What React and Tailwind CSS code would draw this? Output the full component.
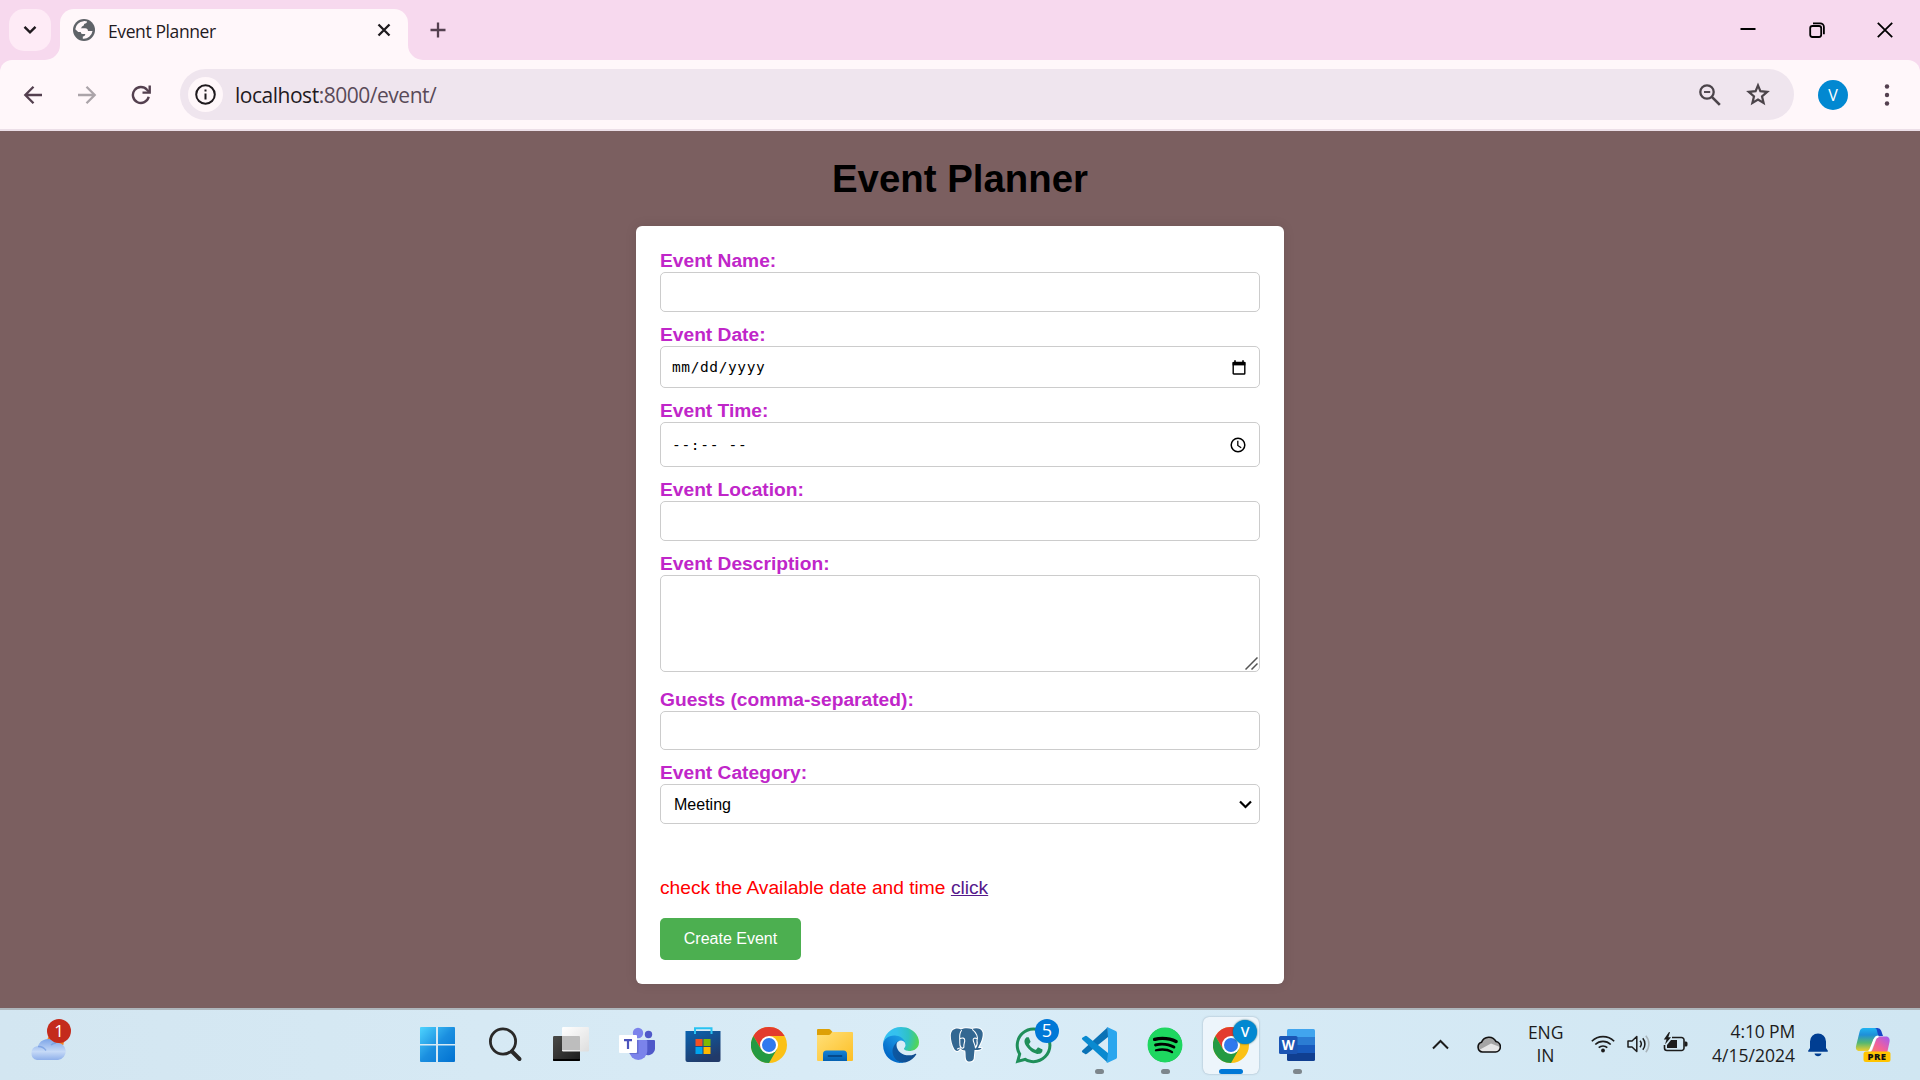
import React from "react";
import { FaSpotify, FaWhatsapp } from "react-icons/fa";

const UI = "font-['Open_Sans','Noto_Sans',sans-serif]";

/* ---------- browser chrome ---------- */

function GlobeIcon() {
  return (
    <svg className="ml-px -mt-px" width="22" height="22" viewBox="0 0 22 22">
      <circle cx="11" cy="11" r="11" fill="#5f6368" />
      <path
        d="M10.500 2.200c1.400-.200 2.700 0 3.600.4-.2 1.600-1.500 2-2.900 2.300-.3 1.500-1 2.200-2.200 2.400-.2 1.100-.6 1.700-1.500 2h4.600c2 0 2.700 1 2.900 2.700h4.500a8.800 8.800 0 0 1-9.700 7.700v-2.300c1.700-.1 2.300-.9 2.500-2.500h-2.800c-1.100 0-1.700-.7-1.700-2H5.200L2.300 10.200A8.800 8.800 0 0 1 10.500 2.200Z"
        fill="#fff7fa"
      />
    </svg>
  );
}

function TabStrip() {
  return (
    <div className="flex h-[60px] shrink-0 bg-[#f7d9ee] text-[#1f1a1e]">
      <div className="mt-[9px] ml-[9px] flex size-[42px] items-center justify-center rounded-[15px] bg-[#feebf6]">
        <svg width="14" height="10" viewBox="0 0 14 10" fill="none" stroke="#1f1a1e" strokeWidth="2.4">
          <path d="M1.5 1.8 7 7.3l5.500-5.500" />
        </svg>
      </div>
      <div className="relative mt-[9px] ml-[9px] flex h-[51px] w-[348px] items-center rounded-t-[14px] bg-[#fff7fa] pr-[17px] pl-[12px] pb-[9px]">
        <svg className="absolute bottom-0 -left-[15px]" width="15" height="15" viewBox="0 0 15 15">
          <path d="M15 0v15H0A15 15 0 0 0 15 0Z" fill="#fff7fa" />
        </svg>
        <svg className="absolute -right-[15px] bottom-0" width="15" height="15" viewBox="0 0 15 15">
          <path d="M0 0v15h15A15 15 0 0 1 0 0Z" fill="#fff7fa" />
        </svg>
        <GlobeIcon />
        <span className="mt-px ml-[13px] grow text-[17.500px] leading-[24px] tracking-[-0.4px]">Event Planner</span>
        <svg width="14" height="14" viewBox="0 0 14 14" fill="none" stroke="#1f1a1e" strokeWidth="2.300">
          <path d="m1.500 1.500 11 11m0-11-11 11" />
        </svg>
      </div>
      <svg className="mt-[22px] ml-[22px]" width="16" height="16" viewBox="0 0 16 16" fill="none" stroke="#54404f" strokeWidth="2.300">
        <path d="M8 .5v15M.5 8h15" />
      </svg>
      <div className="ml-auto flex h-[59px] items-center gap-[52.500px] pr-[27px] text-black">
        <svg width="16" height="16" viewBox="0 0 16 16" stroke="currentColor" strokeWidth="2">
          <path d="M.5 7h15" />
        </svg>
        <svg width="16" height="16" viewBox="0 0 16 16" fill="none" stroke="currentColor" strokeWidth="1.800">
          <rect x="1.200" y="4" width="11" height="11" rx="2.200" />
          <path d="M4 1.300h7.200a3.700 3.700 0 0 1 3.700 3.700v7.200" />
        </svg>
        <svg width="16" height="16" viewBox="0 0 16 16" stroke="currentColor" strokeWidth="1.800">
          <path d="m.8.8 14.400 14.400m0-14.400L.8 15.200" />
        </svg>
      </div>
    </div>
  );
}

function Toolbar() {
  return (
    <div className="h-[71px] shrink-0 bg-[#f7d9ee]">
      <div className="flex h-full items-center rounded-t-[12px] border-b-2 border-[#ecdfe8] bg-[#fff7fa] pl-[23px]">
        <svg width="20" height="20" viewBox="0 0 20 20" fill="none" stroke="#54404f" strokeWidth="2.300">
          <path d="M19 10H2.500M10.500 1.800 2.300 10l8.200 8.200" />
        </svg>
        <svg className="ml-[34px]" width="20" height="20" viewBox="0 0 20 20" fill="none" stroke="#aba4a9" strokeWidth="2.300">
          <path d="M1 10h16.500M9.500 1.800l8.200 8.200-8.200 8.200" />
        </svg>
        <svg className="ml-[34px]" width="20" height="20" viewBox="0 0 20 20" fill="none" stroke="#54404f" strokeWidth="2.400">
          <path d="M17.700 11.800A8 8 0 1 1 16 4.800l2.200 2.200" />
          <path d="M18.700.4v7.200h-7.200" />
        </svg>
        <div className="ml-[29px] flex h-[51px] w-[1614px] items-center rounded-full bg-[#efe5ee] pr-[24px] pl-[8px]">
          <div className="flex size-[35px] items-center justify-center rounded-full bg-[#fff7fa]">
            <svg width="21" height="21" viewBox="0 0 21 21" fill="none" stroke="#1f1a1e" strokeWidth="2">
              <circle cx="10.500" cy="10.500" r="9.300" />
              <path d="M10.500 9.400v6M10.500 5.500v2" />
            </svg>
          </div>
          <span className="ml-[12px] grow text-[21px] leading-[28px] tracking-[-0.480px] text-[#594a58]">
            <span className="text-[#1f1a1e]">localhost</span>:8000/event/
          </span>
          <svg width="22" height="22" viewBox="0 0 22 22" fill="none" stroke="#4b444a">
            <circle cx="8" cy="8" r="6.700" strokeWidth="2.300" />
            <path d="m12.800 12.800 8 8" strokeWidth="2.600" />
            <path d="M5 8h6.200" strokeWidth="1.900" />
          </svg>
          <svg className="-mt-px ml-[25px]" width="24" height="24" viewBox="0 0 24 24" fill="none" stroke="#4b444a" strokeWidth="2.200">
            <path d="m12 3.300 2.400 5.900 6.800.600-5.200 4.500 1.600 6.700L12 17.500 6.400 21 8 14.300 2.800 9.800l6.800-.6Z" />
          </svg>
        </div>
        <div className="ml-[24px] flex size-[30px] items-center justify-center rounded-full bg-[#0288d1] text-[16px] text-white">V</div>
        <svg className="ml-[36px]" width="6" height="22" viewBox="0 0 6 22" fill="#54404f">
          <circle cx="3" cy="2.500" r="2.200" />
          <circle cx="3" cy="11" r="2.200" />
          <circle cx="3" cy="19.500" r="2.200" />
        </svg>
      </div>
    </div>
  );
}

/* ---------- page ---------- */

function Field({ label, className, children }) {
  return (
    <div className="mb-[12px]">
      <div className="h-[22px] text-[19.200px] leading-[22px] font-bold text-[#c026c9]">{label}</div>
      <div className={"relative flex w-full items-center rounded-[5px] border border-[#ccc] bg-white text-black " + className}>
        {children}
      </div>
    </div>
  );
}

function EventPage() {
  return (
    <main className="flex h-[877px] shrink-0 flex-col items-center bg-[#7b5f60] pt-[26px] font-['Liberation_Sans',Arial,sans-serif]">
      <h1 className="text-[38.400px] leading-[44px] font-bold text-black">Event Planner</h1>
      <form className="mt-[25px] h-[758px] w-[648px] rounded-[6px] bg-white p-[24px] shadow-[0_0_12px_rgba(0,0,0,0.100)]">
        <Field label="Event Name:" className="h-[40px]" />
        <Field label="Event Date:" className="h-[42px] justify-between pr-[13px] pl-[11px]">
          <span className="mt-[2px] font-['DejaVu_Sans_Mono',monospace] text-[14.500px] tracking-[0.600px]">mm/dd/yyyy</span>
          <svg width="14" height="15" viewBox="0 0 14 15" fill="none" stroke="#000">
            <rect x="1.200" y="2.500" width="11.600" height="11.500" rx=".6" strokeWidth="1.400" />
            <path d="M.6 3.700h12.800" strokeWidth="3.400" />
            <path d="M3 .3v2M11 .3v2" strokeWidth="1.600" />
          </svg>
        </Field>
        <Field label="Event Time:" className="h-[45px] justify-between pr-[13px] pl-[11px]">
          <span className="mt-[2px] whitespace-pre font-['DejaVu_Sans_Mono',monospace] text-[14.500px] tracking-[0.700px]">--:-- --</span>
          <svg width="16" height="16" viewBox="0 0 16 16" fill="none" stroke="#000">
            <circle cx="8" cy="8" r="6.800" strokeWidth="1.500" />
            <path d="M7.800 3.800v4.700l3.400 2.200" strokeWidth="1.300" />
          </svg>
        </Field>
        <Field label="Event Location:" className="h-[40px]" />
        <Field label="Event Description:" className="mb-[17px] h-[97px]">
          <svg className="absolute right-px bottom-[1px]" width="13" height="13" viewBox="0 0 13 13" stroke="#555" strokeWidth="1.500">
            <path d="M.5 12.500l12-12M6.500 12.500l6-6" />
          </svg>
        </Field>
        <Field label="Guests (comma-separated):" className="h-[39px]" />
        <Field label="Event Category:" className="h-[40px] justify-between pr-[7px] pl-[13px]">
          <span className="mt-[2px] text-[16px]">Meeting</span>
          <svg className="mt-px" width="13" height="9" viewBox="0 0 13 9" fill="none" stroke="#000" strokeWidth="2.200">
            <path d="M1 1.500 6.500 7 12 1.500" />
          </svg>
        </Field>
        <p className="mt-[53px] text-[19.200px] leading-[22px] text-[#ff0000]">
          check the Available date and time{" "}
          <a href="#" className="text-[#551a8b] underline">
            click
          </a>
        </p>
        <button type="button" className="mt-[19px] h-[42px] w-[141px] rounded-[5px] bg-[#4caf50] text-[16px] leading-[18px] whitespace-nowrap text-white">
          Create Event
        </button>
      </form>
    </main>
  );
}

/* ---------- taskbar icons ---------- */

function WindowsIcon() {
  return (
    <svg width="36" height="36" viewBox="0 0 36 36">
      <defs>
        <linearGradient id="win" x1="0" y1="0" x2="36" y2="36" gradientUnits="userSpaceOnUse">
          <stop offset="0" stopColor="#4fd6ff" />
          <stop offset=".5" stopColor="#1b8fe0" />
          <stop offset="1" stopColor="#0070d0" />
        </linearGradient>
      </defs>
      <path fill="url(#win)" d="M2 0h15v17H1V1a1 1 0 0 1 1-1ZM19 0h16a1 1 0 0 1 1 1v16H19ZM1 18.500h16V35H2a1 1 0 0 1-1-1ZM19 18.500h17V34a1 1 0 0 1-1 1H19Z" />
    </svg>
  );
}

function SearchIcon() {
  return (
    <svg width="36" height="36" viewBox="0 0 36 36" fill="none" stroke="#2a2928">
      <circle cx="16" cy="14.500" r="12.600" strokeWidth="2.800" />
      <path d="m25 24.500 7.500 7.500" strokeWidth="4" strokeLinecap="round" />
    </svg>
  );
}

function TaskViewIcon() {
  return (
    <svg width="36" height="36" viewBox="0 0 36 36">
      <defs>
        <linearGradient id="tv1" x1="0" y1="0" x2="1" y2="1">
          <stop offset="0" stopColor="#4a4a48" />
          <stop offset="1" stopColor="#1c1c1c" />
        </linearGradient>
        <linearGradient id="tv2" x1="0" y1="0" x2="1" y2="1">
          <stop offset="0" stopColor="#fff" />
          <stop offset="1" stopColor="#dedede" />
        </linearGradient>
      </defs>
      <rect y="9" width="27" height="25" rx="1.200" fill="url(#tv1)" />
      <path d="M0 32h27v1a1 1 0 0 1-1 1H1a1 1 0 0 1-1-1Z" fill="#000" />
      <rect x="9" width="27" height="24.500" rx="1.200" fill="url(#tv2)" />
      <path d="M9 9h17a1 1 0 0 1 1 1v13H9Z" fill="#bdbdbd" />
    </svg>
  );
}

function TeamsIcon() {
  return (
    <svg width="36" height="36" viewBox="0 0 36 36">
      <circle cx="29.500" cy="7.500" r="3.700" fill="#5059c9" />
      <path d="M26 13h9a1 1 0 0 1 1 1v8a7 7 0 0 1-10 5.500Z" fill="#5059c9" />
      <circle cx="19" cy="6" r="5.200" fill="#7b83eb" />
      <path d="M12 13h15a1.300 1.300 0 0 1 1.300 1.300V24a9 9 0 0 1-18 0V14Z" fill="#7b83eb" />
      <path d="M12 13h7.500v14h-9V14Z" fill="#5a62c0" opacity=".6" />
      <rect x="0" y="8" width="18" height="18" rx="1" fill="#fff" />
      <path d="M5 13.200h8M9 13.200V22" stroke="#4b53bc" strokeWidth="2.200" />
    </svg>
  );
}

function StoreIcon() {
  return (
    <svg width="36" height="36" viewBox="0 0 36 36">
      <defs>
        <linearGradient id="store" x1="0" y1="0" x2=".5" y2="1">
          <stop offset="0" stopColor="#0a63b0" />
          <stop offset="1" stopColor="#213a69" />
        </linearGradient>
      </defs>
      <path d="M.500 4h35v29a2 2 0 0 1-2 2h-31a2 2 0 0 1-2-2Z" fill="url(#store)" />
      <path d="M10 7V1.200h16.500V7" fill="none" stroke="#29c3f2" strokeWidth="2" />
      <path d="M10.500 12h7v7h-7z" fill="#f25022" />
      <path d="M18.500 12h7v7h-7z" fill="#7fba00" />
      <path d="M10.500 20h7v7h-7z" fill="#00a4ef" />
      <path d="M18.500 20h7v7h-7z" fill="#ffb900" />
    </svg>
  );
}

function ChromeIcon() {
  return (
    <svg width="36" height="36" viewBox="0 0 36 36">
      <circle cx="18" cy="18" r="18" fill="#fbc116" />
      <path d="M2.410 9A18 18 0 0 1 33.590 9H18l-7.800 13.500Z" fill="#e33b2e" />
      <path d="M2.410 9A18 18 0 0 0 18 36l7.800-13.500H10.200Z" fill="#249a42" />
      <circle cx="18" cy="18" r="9" fill="#fff" />
      <circle cx="18" cy="18" r="7" fill="#3079ee" />
    </svg>
  );
}

function ExplorerIcon() {
  return (
    <svg width="36" height="36" viewBox="0 0 36 36">
      <defs>
        <linearGradient id="fold" x1="0" y1="0" x2="1" y2="1">
          <stop offset="0" stopColor="#ffe07a" />
          <stop offset="1" stopColor="#fdbf25" />
        </linearGradient>
        <linearGradient id="drawer" x1="0" y1="0" x2="0" y2="1">
          <stop offset="0" stopColor="#1482d8" />
          <stop offset="1" stopColor="#0560b0" />
        </linearGradient>
      </defs>
      <path d="M0 3a1 1 0 0 1 1-1h10.500c1 0 1.500.4 2.200 1L15.500 5v5H0Z" fill="#dda006" />
      <path d="M0 8h11c1.400 0 2-.5 3-1.500L15 5h20a1 1 0 0 1 1 1v27a1 1 0 0 1-1 1H1a1 1 0 0 1-1-1Z" fill="url(#fold)" />
      <path d="M6 34v-7a3.500 3.500 0 0 1 3.500-3.500h17A3.500 3.500 0 0 1 30 27v7Z" fill="url(#drawer)" />
      <path d="M11.500 29h13" stroke="#054a8c" strokeWidth="1.800" strokeLinecap="round" />
    </svg>
  );
}

function EdgeIcon() {
  return (
    <svg width="36" height="36" viewBox="0 0 256 256">
      <defs>
        <linearGradient id="e1" x1="63" y1="177" x2="241" y2="177" gradientUnits="userSpaceOnUse">
          <stop offset="0" stopColor="#0c59a4" />
          <stop offset="1" stopColor="#114a8b" />
        </linearGradient>
        <linearGradient id="e2" x1="157" y1="100" x2="46" y2="221" gradientUnits="userSpaceOnUse">
          <stop offset="0" stopColor="#1b9de2" />
          <stop offset=".4" stopColor="#1388dc" />
          <stop offset="1" stopColor="#0067c6" />
        </linearGradient>
        <radialGradient id="e3" cx="26" cy="60" r="260" gradientUnits="userSpaceOnUse">
          <stop offset="0" stopColor="#35c1f1" />
          <stop offset=".3" stopColor="#34c1ed" />
          <stop offset=".6" stopColor="#2fc2c4" />
          <stop offset=".85" stopColor="#4ed360" />
          <stop offset="1" stopColor="#6ee04c" />
        </radialGradient>
      </defs>
      <path fill="url(#e1)" d="M231 190.500c-3.400 1.800-6.900 3.400-10.500 4.700a101.800 101.800 0 0 1-35.900 6.400c-47.300 0-88.500-32.500-88.500-74.300 0-11.400 6.400-21.900 16.400-27.300-42.800 1.800-53.800 46.400-53.800 72.500 0 74 68.100 81.400 82.800 81.400 7.900 0 19.800-2.300 27-4.600l1.300-.4a128.300 128.300 0 0 0 66.600-52.800 4 4 0 0 0-5.400-5.600Z" />
      <path fill="url(#e2)" d="M105.700 241.400a79.200 79.200 0 0 1-22.700-21.300 80.700 80.700 0 0 1 29.500-120c3.100-1.500 8.500-4.100 15.600-4a32.400 32.400 0 0 1 25.700 13 31.900 31.900 0 0 1 6.300 18.700c0-.2 24.500-79.600-80-79.600-43.900 0-80 41.700-80 78.200a130.200 130.200 0 0 0 12.100 56 128 128 0 0 0 156.400 67 75.500 75.500 0 0 1-62.800-8Z" />
      <path fill="url(#e3)" d="M152.300 148.900c-.8 1-3.300 2.500-3.300 5.700 0 2.600 1.700 5.100 4.700 7.200 14.400 10 41.500 8.700 41.600 8.700 10.700 0 21.100-2.900 30.300-8.300a61.400 61.400 0 0 0 30.400-52.900c.3-22.400-8-37.300-11.300-43.900C223.500 23.900 177.700 0 128 0A128 128 0 0 0 0 126.200c.5-36.500 36.800-66 80-66 3.500 0 23.500.3 42 10 16.300 8.600 24.900 19 30.800 29.200 6.200 10.700 7.300 24.100 7.300 29.500 0 5.300-2.700 13.300-7.800 20Z" />
    </svg>
  );
}

function PostgresIcon() {
  return (
    <svg width="36" height="36" viewBox="0 0 36 36" strokeLinejoin="round">
      <path
        d="M12 2.500C8 .5 2 1.500 1.800 8.500c-.1 4.500 1.500 9.500 3.200 13 1.200 2.600 3.500 3.200 5 1.500l1.500-1.700c1.200 1.600 2.800 2.200 4.700 2.200.7 3 .2 6 .8 8.500.5 3.500 7.200 3.500 7.700-.5l.8-8.500c2 .3 5.500 0 7.200-1.800-1.400-.4-2.700-.2-3.700-.5 3-5 5.500-11.500 4.500-15.500C32 .6 26.500.9 23 2 19 .9 15 1 12 2.500Z"
        fill="#336791"
        stroke="#fff"
        strokeWidth="2"
        paintOrder="stroke"
      />
      <path
        d="M12.500 3.500C9.500 7 11 11.500 10.800 15.500c-.2 2.200.2 4 1.500 5.300M11.200 11.500c2.300-1 4.300-.5 4.500 1.500.3 2.500-1.200 4-.8 6.500.2 1.300-1.400 2-2.600 1.300-1.600.2-2.800.4-3.800 1.200M23.500 2.600c4 3 6 8 4.500 11 .6 2.600.2 5-1.500 7.200M27.800 11.500c-2-.8-3.600-.3-3.600 1.200 0 2.500 2 4.800 2.200 8"
        fill="none"
        stroke="#fff"
        strokeWidth="1.100"
        strokeLinecap="round"
      />
    </svg>
  );
}

function VsCodeIcon() {
  return (
    <svg width="36" height="36" viewBox="0 0 36 36">
      <path d="M1.300 23.500 26.700.2 27 10 6 26.800a1.700 1.700 0 0 1-2.200-.1l-2.500-1.500a1.200 1.200 0 0 1 0-1.700Z" fill="#0a72b6" />
      <path d="M1.300 12.500 26.700 35.800 27 26 6 9.200a1.700 1.700 0 0 0-2.200.1l-2.500 1.500a1.200 1.200 0 0 0 0 1.700Z" fill="#0a8ad0" />
      <path d="M26.700 35.700c-.8.300-1.700.1-2.400-.5.900.9 2.700.2 2.700-1.200V2c0-1.400-1.800-2.100-2.700-1.200.7-.6 1.600-.8 2.400-.5l8 3.700A2.200 2.200 0 0 1 36 6v24c0 .9-.5 1.700-1.300 2Z" fill="#2aa6ee" />
    </svg>
  );
}

function WordIcon() {
  return (
    <svg width="36" height="36" viewBox="0 0 36 36">
      <path d="M9.500 2h25A1.500 1.500 0 0 1 36 3.500V10H8V3.500A1.500 1.500 0 0 1 9.500 2Z" fill="#41a5ee" />
      <path d="M8 10h28v8H8z" fill="#2b7cd3" />
      <path d="M8 18h28v8H8z" fill="#185abd" />
      <path d="M8 26h28v6.500a1.500 1.500 0 0 1-1.500 1.500h-25A1.500 1.500 0 0 1 8 32.500Z" fill="#103f91" />
      <rect y="9" width="18.500" height="18" rx="1.500" fill="#1b55b4" />
      <text x="9.200" y="23" textAnchor="middle" fontSize="13.500" fontWeight="700" fill="#fff" fontFamily="Open Sans, sans-serif">
        W
      </text>
    </svg>
  );
}

function WeatherIcon() {
  return (
    <svg width="36" height="36" viewBox="0 0 36 36">
      <defs>
        <linearGradient id="cl" x1="0" y1="0" x2="0" y2="1">
          <stop offset="0" stopColor="#7da5e8" />
          <stop offset=".6" stopColor="#c6daf7" />
          <stop offset="1" stopColor="#8fb0ea" />
        </linearGradient>
      </defs>
      <circle cx="25.500" cy="16.500" r="8.500" fill="#f58220" />
      <path d="M7 35a7 7 0 0 1 0-13.700 6.500 6.500 0 0 1 1-.1 10.500 10.500 0 0 1 18-3.500A8.700 8.700 0 0 1 28 35Z" fill="url(#cl)" />
      <path d="M8 21.500a9 9 0 0 1 8 4M21 20a8 8 0 0 1 5-2" fill="none" stroke="#6f98e0" strokeWidth="1.400" opacity=".7" />
    </svg>
  );
}

function Badge({ className, children }) {
  return (
    <span className={"absolute flex size-[24px] items-center justify-center rounded-full text-white " + className}>{children}</span>
  );
}

function AppSlot({ children, active, running }) {
  return (
    <div className="flex w-[66px] items-center justify-center">
      <div className={"relative flex h-[57px] w-[56px] items-center justify-center rounded-[6px] " + (active ? "bg-[#edf5fb] shadow-[0_0_2px_rgba(90,110,130,0.500)]" : "")}>
        {children}
        {active && <span className="absolute bottom-0 left-[16px] h-[5px] w-[24px] rounded-full bg-[#0078d7]" />}
        {running && <span className="absolute bottom-0 left-[24px] h-[5px] w-[9px] rounded-full bg-[#7d868c]" />}
      </div>
    </div>
  );
}

function TrayIcons() {
  return (
    <>
      <svg className="-mt-px mr-[28px]" width="17" height="11" viewBox="0 0 17 11" fill="none" stroke="#1c1c1c" strokeWidth="2">
        <path d="M1 9.500 8.500 2 16 9.500" />
      </svg>
      <svg className="-mt-px mr-[27px]" width="24" height="17" viewBox="0 0 24 17">
        <path d="M5.500 16A5 5 0 0 1 4.500 6.300 8 8 0 0 1 19 5.500 5.300 5.300 0 0 1 18.500 16Z" fill="#e6e6e6" />
        <path d="M4.500 6.300A8 8 0 0 1 19 5.500a5.300 5.300 0 0 1 4 5.500l-9-3.500L3 13.500a5 5 0 0 1 1.500-7.200Z" fill="#a5a5a5" />
        <path d="M5.500 16A5 5 0 0 1 4.500 6.300 8 8 0 0 1 19 5.500 5.300 5.300 0 0 1 18.500 16Z" fill="none" stroke="#111" strokeWidth="1.600" />
      </svg>
      <div className="mt-[-2px] mr-[28px] w-[35px] text-center text-[17.500px] leading-[23px] tracking-[-0.100px]">
        ENG
        <br />
        IN
      </div>
      <svg className="mr-[12px] -mt-[3px]" width="24" height="18" viewBox="0 0 24 18" fill="none" stroke="#1c1c1c" strokeWidth="1.600">
        <path d="M.8 6.200a16 16 0 0 1 22.400 0M4.300 9.500a11 11 0 0 1 15.400 0M7.700 12.700a6.200 6.200 0 0 1 8.600 0" />
        <circle cx="12" cy="15.500" r="1.900" fill="#1c1c1c" stroke="none" />
      </svg>
      <svg className="mr-[12px] -mt-[2px]" width="24" height="20" viewBox="0 0 24 20" fill="none" stroke="#1c1c1c" strokeWidth="1.500">
        <path d="M1 7v6h4l4.800 4.500v-15L5 7Z" strokeLinejoin="round" />
        <path d="M13 6.800a5 5 0 0 1 0 6.400M15.800 4.200a9 9 0 0 1 0 11.600" />
        <path d="M18.800 1.800a12.500 12.500 0 0 1 0 16.400" stroke="#a9b5bb" />
      </svg>
      <svg className="mt-[-6px] mr-[23px]" width="26" height="20" viewBox="0 0 26 20">
        <path d="M9 5.500h9.500a2.500 2.500 0 0 1 2.500 2.500v8a2.500 2.500 0 0 1-2.500 2.500H4A2.500 2.500 0 0 1 1.500 16v-3" fill="none" stroke="#1c1c1c" strokeWidth="1.600" />
        <path d="M8 8h6v8H4v-3Z" fill="#1c1c1c" />
        <path d="M21.500 9.500H23a1.500 1.500 0 0 1 1.500 1.500v2a1.500 1.500 0 0 1-1.500 1.500h-1.500Z" fill="#1c1c1c" />
        <path d="M6 0 .8 7.500h2.700L2 12.500l6-7.300H5.300L7 .3Z" fill="#1c1c1c" />
      </svg>
      <div className="mt-[-4px] mr-[13px] w-[83px] text-right text-[17.500px] leading-[24px] whitespace-nowrap">
        <span className="tracking-[-0.150px]">4:10 PM</span>
        <br />
        4/15/2024
      </div>
      <svg className="mr-[27px]" width="20" height="24" viewBox="0 0 20 24" fill="#003e92">
        <path d="M10 .5a8 8 0 0 0-8 8v6.500L.3 17.500a.8.8 0 0 0 .7 1.300h18a.8.8 0 0 0 .7-1.300L18 15V8.500a8 8 0 0 0-8-8ZM6.500 20.500h7a3.600 3.600 0 0 1-7 0Z" />
      </svg>
      <svg className="mr-[29px]" width="36" height="36" viewBox="0 0 36 36">
        <defs>
          <linearGradient id="cp1" x1="0" y1="0" x2="0" y2="1">
            <stop offset="0" stopColor="#20b4f2" />
            <stop offset=".3" stopColor="#1f8fd8" />
            <stop offset=".65" stopColor="#56b870" />
            <stop offset="1" stopColor="#f2cf2c" />
          </linearGradient>
          <linearGradient id="cp2" x1="1" y1="0" x2="0" y2="1">
            <stop offset="0" stopColor="#a15af5" />
            <stop offset=".5" stopColor="#f0609c" />
            <stop offset="1" stopColor="#ff8a4a" />
          </linearGradient>
        </defs>
        <path d="M14 1h8.500a4 4 0 0 1 3.700 2.700L28 9h-5c-2 0-3 1-3.700 3Z" fill="#1746c8" />
        <path d="M8.500 1h11c1.500 0 2 .8 2.300 2l1.500 6c-2.500 0-3.800 1-4.800 4l-3 9c-.6 1.700-1.500 2-3 2H4.500C1.300 24 .3 21.500 1.200 18.500L4.500 5C5.300 2 6.500 1 8.500 1Z" fill="url(#cp1)" />
        <path d="M24.500 9.500H31c3 0 4.200 2.500 3.500 5.500L32 26.500H11.500c3.500 0 5-1.500 6-4l3.500-9.500c.8-2.300 1.500-3.500 3.500-3.500Z" fill="url(#cp2)" />
        <path d="M23.500 9.500c-2.500 0-3.500 1.500-4.200 3.500l-3.500 9c-.5 1.300-1 2-2 2.500" fill="none" stroke="#fff" strokeWidth="2.200" />
        <rect x="8.500" y="24.500" width="27" height="10.500" rx="2.500" fill="#ffc400" />
        <text x="22" y="33" textAnchor="middle" fontSize="9.500" fontWeight="800" fill="#111" fontFamily="Open Sans, sans-serif" letterSpacing=".4">
          PRE
        </text>
      </svg>
    </>
  );
}

function Taskbar() {
  return (
    <footer className="flex h-[72px] shrink-0 items-stretch border-t-2 border-[#aeb6bc] bg-linear-to-r from-[#d3e6f1] via-[#d9ecf7] to-[#d0e6f2] text-[#1c1c1c]">
      <div className="relative mt-[15px] ml-[30px] h-[36px] w-[374px]">
        <WeatherIcon />
        <Badge className="-top-[6px] left-[17px] bg-[#c42b1c] text-[17px]">1</Badge>
      </div>
      <AppSlot><WindowsIcon /></AppSlot>
      <div className="ml-[2px] flex">
        <AppSlot><SearchIcon /></AppSlot>
        <AppSlot><TaskViewIcon /></AppSlot>
        <AppSlot><TeamsIcon /></AppSlot>
        <AppSlot><StoreIcon /></AppSlot>
        <AppSlot><ChromeIcon /></AppSlot>
        <AppSlot><ExplorerIcon /></AppSlot>
        <AppSlot><EdgeIcon /></AppSlot>
        <AppSlot><PostgresIcon /></AppSlot>
        <AppSlot>
          <FaWhatsapp className="size-[41px] shrink-0 text-[#1f8f5a]" />
          <Badge className="top-[2px] left-[30px] bg-[#0078d7] text-[18px]">5</Badge>
        </AppSlot>
        <AppSlot running><VsCodeIcon /></AppSlot>
        <AppSlot running>
          <span className="flex size-[34px] items-center justify-center rounded-full bg-black">
            <FaSpotify className="size-[36px] shrink-0 text-[#1ed760]" />
          </span>
        </AppSlot>
        <AppSlot active>
          <ChromeIcon />
          <Badge className="top-[3px] left-[30px] bg-[#0288d1] text-[14px] font-semibold text-[#b5dcf0] shadow-[0_0_2px_#056]">V</Badge>
        </AppSlot>
        <AppSlot running><WordIcon /></AppSlot>
      </div>
      <div className="ml-auto flex items-center">
        <TrayIcons />
      </div>
    </footer>
  );
}

export default function App() {
  return (
    <div className={"flex h-[1080px] w-[1920px] flex-col overflow-hidden " + UI}>
      <TabStrip />
      <Toolbar />
      <EventPage />
      <Taskbar />
    </div>
  );
}
